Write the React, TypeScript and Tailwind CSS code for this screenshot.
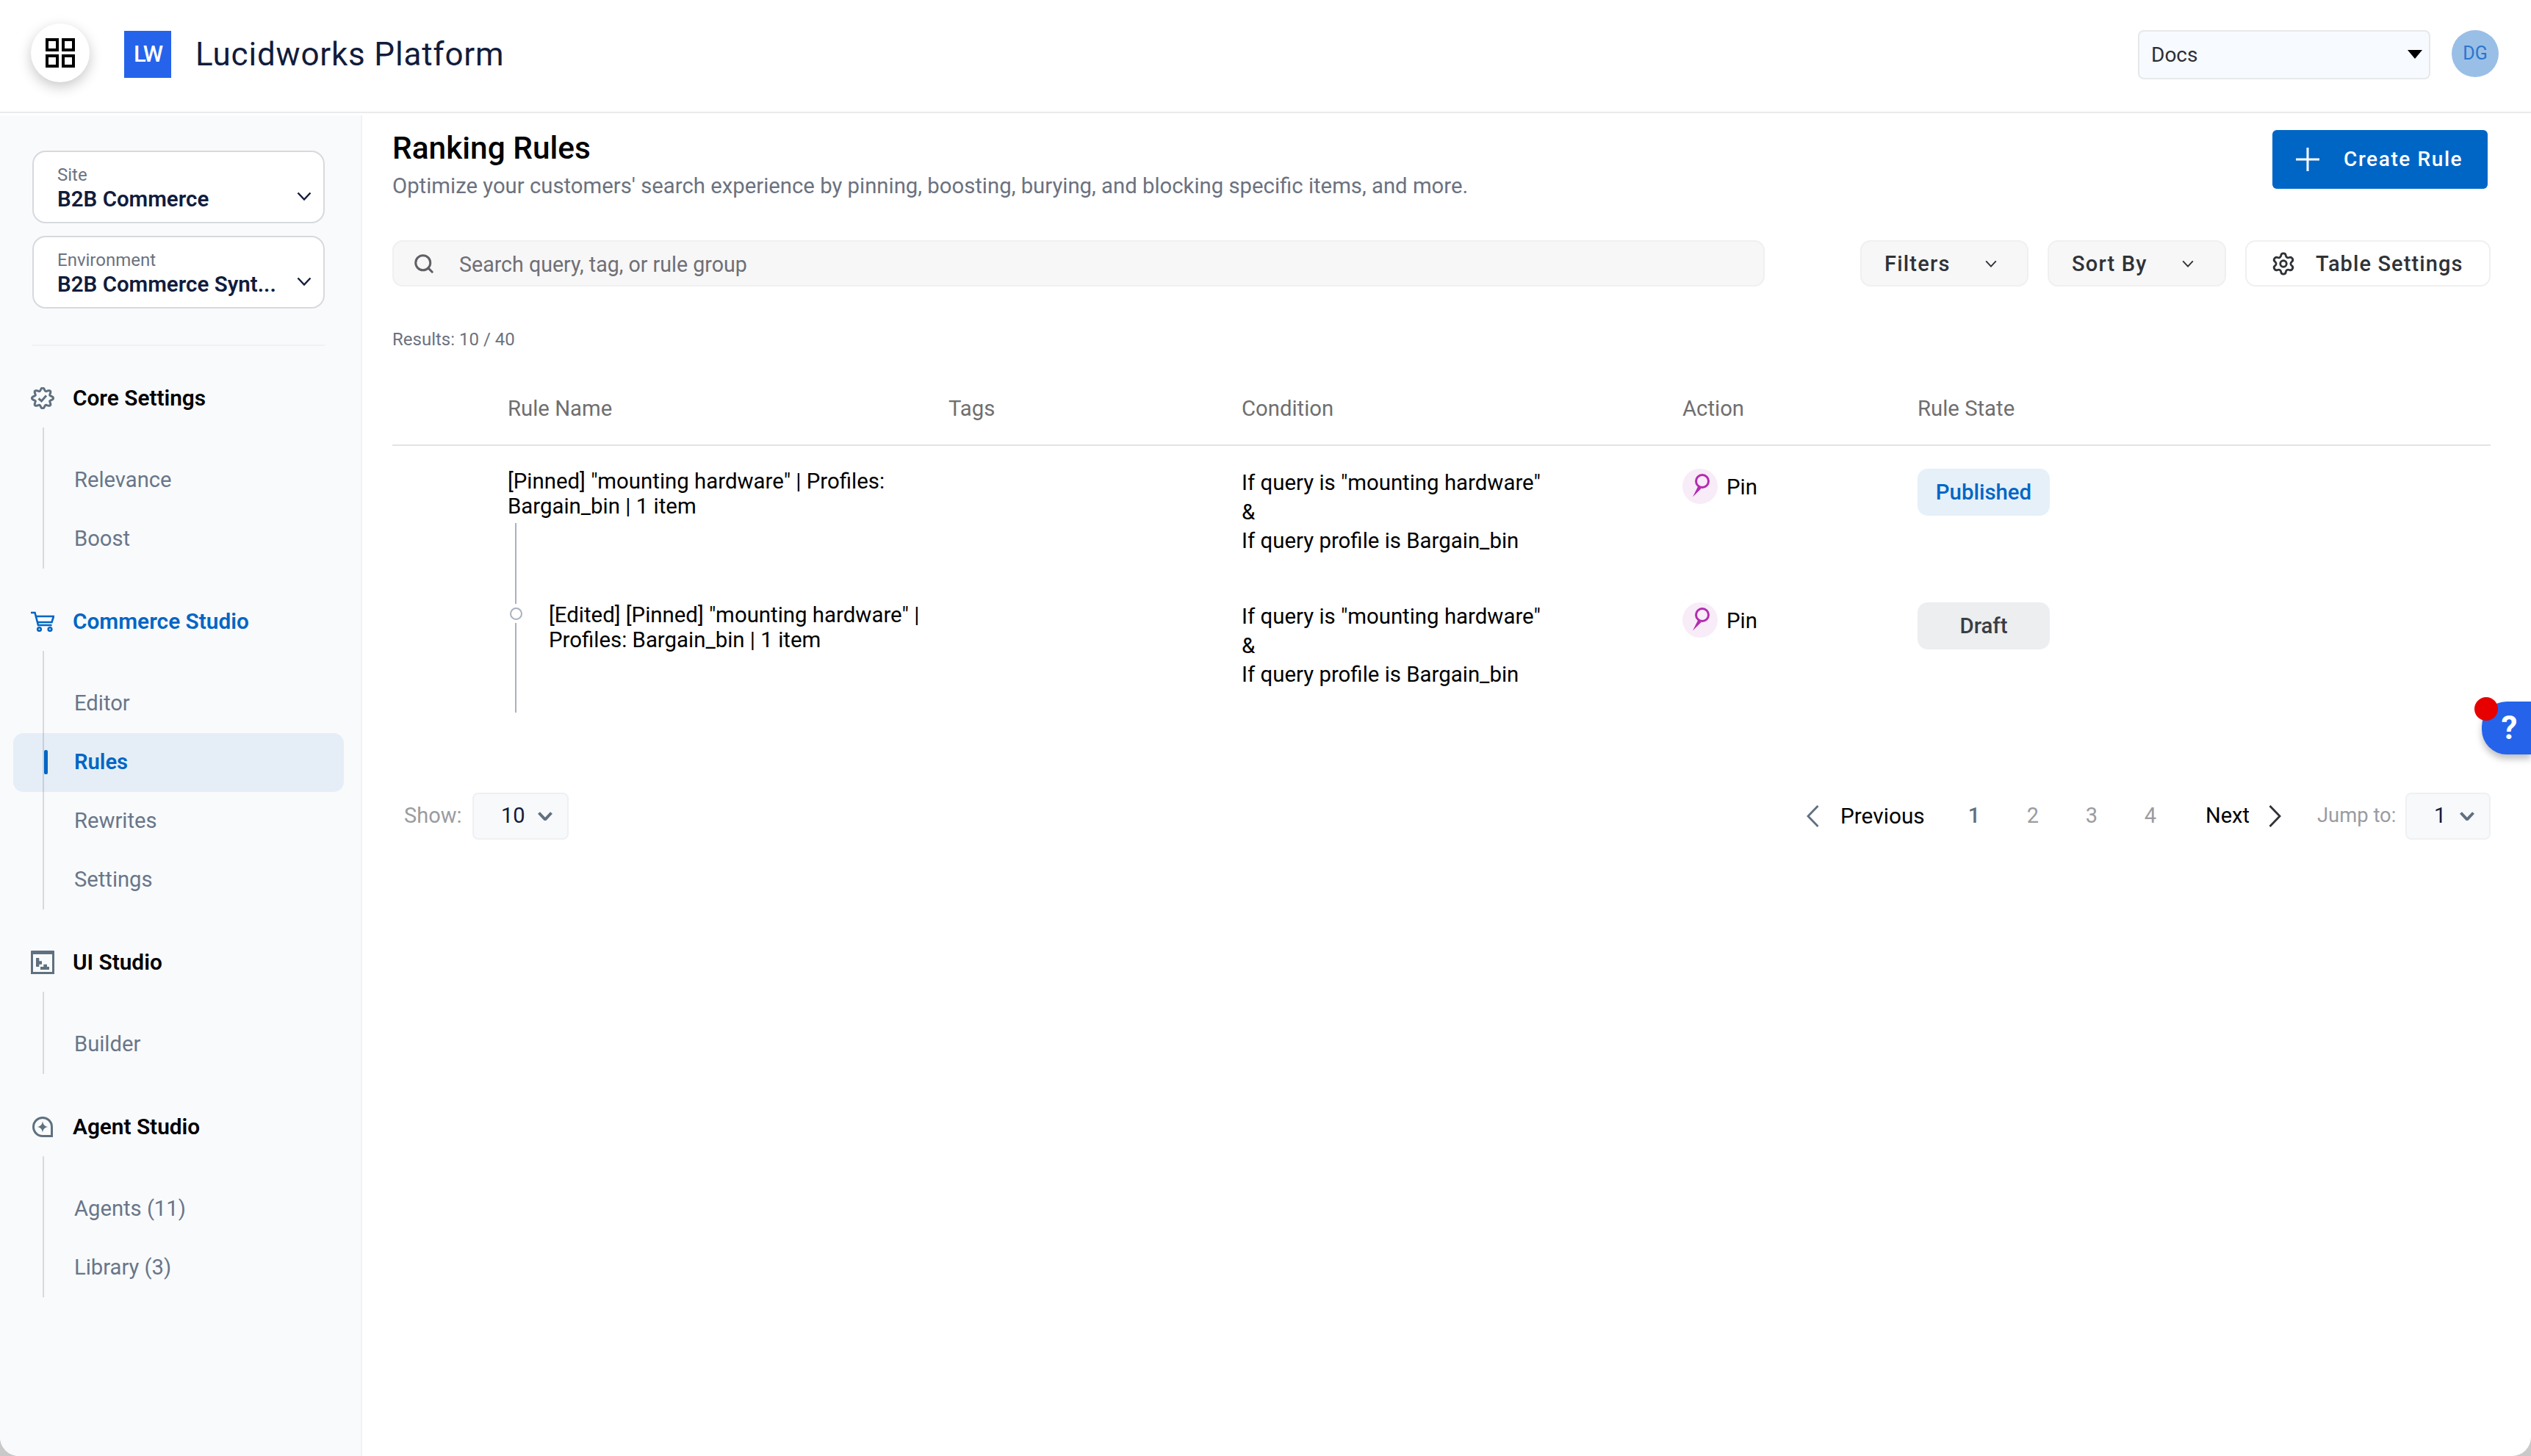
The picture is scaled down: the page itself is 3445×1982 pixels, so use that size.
import { Search, Settings } from "lucide-react";
import type { ReactNode } from "react";

const Chevron = ({ className = "", thick }: { className?: string; thick?: boolean }) => (
  <svg viewBox="0 0 20 12" fill="none" stroke="currentColor" strokeWidth={thick ? 4 : 2.4} className={className}>
    <path d="M1.5 1.5 10 10.5l8.5-9" />
  </svg>
);

const badgePoints = Array.from({ length: 97 }, (_, i) => {
  const t = (i / 96) * Math.PI * 2;
  const r = 12.6 + 2 * Math.cos(8 * t);
  return `${(16 + r * Math.sin(t)).toFixed(2)},${(15 + r * 0.96 * -Math.cos(t)).toFixed(2)}`;
}).join(" ");

const CoreIcon = () => (
  <svg viewBox="0 0 32 30" className="w-[32px] h-[30px]" fill="none" stroke="#5f7080" strokeWidth="3">
    <polyline points={badgePoints} />
    <path d="M10.5 15.5l4 3.5 6.5-7.5" />
  </svg>
);

const CartIcon = () => (
  <svg viewBox="0 0 32 28" className="w-[32px] h-[28px]" fill="none" stroke="#0066c5" strokeWidth="2.6">
    <path d="M0 2h5.5l4.5 17h18.5M7.5 7H31l-2.5 8H9.5" />
    <circle cx="11.5" cy="24.5" r="2.3" />
    <circle cx="26" cy="24.5" r="2.3" />
  </svg>
);

const UiIcon = () => (
  <svg viewBox="0 0 32 32" className="w-[32px] h-[32px]">
    <rect x="1.5" y="2.5" width="29" height="28" fill="none" stroke="#5f7080" strokeWidth="3" />
    <rect x="0" y="0" width="32" height="5" rx="1" fill="#5f7080" />
    <path d="M7 10h4.3v4.3H15v4.4h-3.7V22H7zM13 22h4.3v-3.3H22V22h3v4H13z" fill="#5f7080" />
  </svg>
);

const AgentIcon = () => (
  <svg viewBox="0 0 28 28" className="w-[28px] h-[28px]" fill="none">
    <path d="M26.5 26.5H14A12.5 12.5 0 1 1 26.5 14z" stroke="#5f7080" strokeWidth="3" />
    <path d="M14 6.5c.8 4.6 2.9 6.7 7.5 7.5-4.6.8-6.7 2.9-7.5 7.5-.8-4.6-2.9-6.7-7.5-7.5 4.6-.8 6.7-2.9 7.5-7.5z" fill="#5f7080" />
  </svg>
);

const PinIcon = () => (
  <div className="w-[48px] h-[48px] rounded-full bg-[#f7ecf7] shrink-0">
    <svg viewBox="0 0 48 48" className="w-[48px] h-[48px]" fill="none">
      <circle cx="27" cy="17" r="8.5" stroke="#b32bb0" strokeWidth="3" />
      <path d="M21.5 23.5 14 38.5 25.5 27z" fill="#b32bb0" />
    </svg>
  </div>
);

const PageArrow = ({ dir, className }: { dir: "left" | "right"; className: string }) => (
  <svg viewBox="0 0 17 30" fill="none" stroke="currentColor" strokeWidth="2.8" className={`w-[17px] h-[30px] shrink-0 ${className}`}>
    <path d={dir === "left" ? "M15.5 1 2 15l13.5 14" : "M1.5 1 15 15 1.5 29"} />
  </svg>
);

const SelectBox = ({ label, value }: { label: string; value: string }) => (
  <div className="relative w-[398px] h-[99px] rounded-[18px] border-2 border-[#d7d9de] bg-white pl-[32px] pt-[15px]">
    <div className="text-[24px] leading-[32px] text-[#6b7280]">{label}</div>
    <div className="text-[29.5px] leading-[34px] font-semibold text-[#111c3d] whitespace-nowrap">{value}</div>
    <Chevron className="absolute right-[16px] top-[54px] w-[20px] h-[12px] text-[#111c3d]" />
  </div>
);

const NavGroup = ({ icon, title, active, children }: { icon: ReactNode; title: string; active?: boolean; children: ReactNode }) => (
  <div className="mb-[52px]">
    <div className="flex items-center h-[40px] pl-[42px]">
      <div className="w-[32px] flex justify-center">{icon}</div>
      <span className={`ml-[25px] text-[29.8px] font-semibold ${active ? "text-[#0066c5]" : "text-black"}`}>{title}</span>
    </div>
    <div className="ml-[58px] mt-[20px] pt-[32px] border-l-2 border-[#d6d9df]">{children}</div>
  </div>
);

const NavItem = ({ label, active }: { label: string; active?: boolean }) =>
  active ? (
    <div className="relative -ml-[42px] w-[450px] h-[80px] flex items-center pl-[83px] rounded-[14px] bg-[#0066c5]/8 text-[29.2px] font-semibold text-[#0066c5]">
      <div className="absolute left-[42px] top-[23px] w-[5px] h-[33px] rounded-[2px] bg-[#0066c5]" />
      {label}
    </div>
  ) : (
    <div className="h-[80px] flex items-center pl-[41px] text-[29.2px] text-[#68768a]">{label}</div>
  );

const PillButton = ({ label, width, textWidth }: { label: string; width: string; textWidth: string }) => (
  <div className={`flex items-center h-[63px] pl-[31px] rounded-[14px] border-2 border-[#f0f0f0] bg-[#f7f7f7] text-[29px] font-medium text-[#2f3237] tracking-[1.2px] ${width}`}>
    <span className={`pt-[2px] ${textWidth}`}>{label}</span>
    <Chevron className="w-[16px] h-[10px] text-[#2f3237]" />
  </div>
);

const SmallSelect = ({ value, width }: { value: string; width: string }) => (
  <div className={`flex items-center justify-between h-[64px] pl-[37px] pr-[20px] rounded-[8px] border-2 border-[#eff0f2] bg-[#f8f9fb] text-[29px] text-[#111c3d] ${width}`}>
    {value}
    <Chevron thick className="w-[20px] h-[12px] text-[#5f7080]" />
  </div>
);

const cols = "grid grid-cols-[157px_600px_399px_600px_320px_1fr]";

const Row = ({ name, indent, badge, tree }: { name: ReactNode; indent?: boolean; badge: ReactNode; tree?: ReactNode }) => (
  <div className={`${cols} h-[182px] text-[29.4px] text-black`}>
    <div />
    <div className={`relative pt-[31px] leading-[34px] ${indent ? "pl-[56px]" : ""}`}>
      {name}
      {tree}
    </div>
    <div />
    <div className="pt-[31px] leading-[39.5px]">
      <div>If query is "mounting hardware"</div>
      <div>&amp;</div>
      <div>If query profile is Bargain_bin</div>
    </div>
    <div className="pt-[31px] flex items-start gap-[12px]">
      <PinIcon />
      <span className="leading-[50px]">Pin</span>
    </div>
    <div className="pt-[31px]">{badge}</div>
  </div>
);

const Badge = ({ label, className }: { label: string; className: string }) => (
  <div className={`w-[180px] h-[64px] rounded-[14px] flex items-center justify-center font-medium ${className}`}>{label}</div>
);

export default function App() {
  return (
    <div className="w-[3445px] h-[1982px] bg-[#c9c9c9] font-[family-name:Roboto,sans-serif]">
      <div className="relative w-full h-full overflow-hidden rounded-b-[26px] bg-white flex flex-col">
        {/* Header */}
        <header className="h-[154px] shrink-0 flex items-center pl-[42px] pr-[44px] border-b-2 border-[#e9eaec]">
          <div className="w-[80px] h-[80px] -mt-[8px] rounded-full bg-white shadow-[0_6px_18px_rgba(0,0,0,0.22)] flex items-center justify-center">
            <svg viewBox="0 0 40 40" className="w-[40px] h-[40px]" fill="none" stroke="black" strokeWidth="4">
              <rect x="2" y="2" width="14" height="14" />
              <rect x="24" y="2" width="14" height="14" />
              <rect x="2" y="24" width="14" height="14" />
              <rect x="24" y="24" width="14" height="14" />
            </svg>
          </div>
          <div className="ml-[47px] w-[64px] h-[64px] -mt-[4px] bg-[#2563eb] flex items-center justify-center text-white text-[31px] font-medium tracking-[-2px]">LW</div>
          <div className="ml-[33px] -mt-[4px] text-[44px] text-[#111c3d] tracking-[0.8px]">Lucidworks Platform</div>
          <div className="ml-auto -mt-[4px] flex items-center w-[398px] h-[67px] pl-[16px] pr-[9px] justify-between rounded-[8px] border-2 border-[#e7e8ea] bg-[#f7fafe] text-[28px] text-[#2b2f36]">
            <span className="pt-[2px]">Docs</span>
            <svg viewBox="0 0 20 12" className="w-[20px] h-[12px]"><path d="M0 0h20L10 12z" fill="black" /></svg>
          </div>
          <div className="ml-[29px] -mt-[6px] w-[64px] h-[64px] rounded-full bg-[#9abfe6] flex items-center justify-center text-[25px] text-[#2a76cd]">DG</div>
        </header>

        <div className="flex flex-1 mt-[3px] min-h-0">
          {/* Sidebar */}
          <aside className="w-[493px] shrink-0 bg-[#f9fafb] border-r-2 border-[#f1f2f4] pt-[48px]">
            <div className="pl-[44px] flex flex-col gap-[17px]">
              <SelectBox label="Site" value="B2B Commerce" />
              <SelectBox label="Environment" value="B2B Commerce Synt..." />
            </div>
            <div className="ml-[44px] w-[398px] mt-[49px] mb-[51px] h-[2px] bg-[#f0f1f3]" />
            <NavGroup icon={<CoreIcon />} title="Core Settings">
              <NavItem label="Relevance" />
              <NavItem label="Boost" />
            </NavGroup>
            <NavGroup icon={<CartIcon />} title="Commerce Studio" active>
              <NavItem label="Editor" />
              <NavItem label="Rules" active />
              <NavItem label="Rewrites" />
              <NavItem label="Settings" />
            </NavGroup>
            <NavGroup icon={<UiIcon />} title="UI Studio">
              <NavItem label="Builder" />
            </NavGroup>
            <NavGroup icon={<AgentIcon />} title="Agent Studio">
              <NavItem label="Agents (11)" />
              <NavItem label="Library (3)" />
            </NavGroup>
          </aside>

          {/* Main */}
          <main className="flex-1 pl-[41px] pr-[55px] pt-[20px]">
            <div className="flex justify-between items-start h-[96px]">
              <div className="pt-[3px]">
                <h1 className="text-[42.4px] leading-[44px] font-medium text-black">Ranking Rules</h1>
                <p className="mt-[9px] text-[29.3px] leading-[40px] text-[#6b7280]">
                  Optimize your customers' search experience by pinning, boosting, burying, and blocking specific items, and more.
                </p>
              </div>
              <div className="mr-[4px] w-[293px] h-[80px] rounded-[6px] bg-[#0066c5] flex items-center pl-[32px] text-white text-[28px] font-medium tracking-[1.6px]">
                <svg viewBox="0 0 32 32" className="w-[32px] h-[32px]" stroke="white" strokeWidth="3">
                  <path d="M16 0v32M0 16h32" />
                </svg>
                <span className="ml-[33px]">Create Rule</span>
              </div>
            </div>

            <div className="mt-[54px] flex items-center">
              <div className="w-[1868px] h-[63px] flex items-center pl-[26px] rounded-[14px] border-2 border-[#f0f0f0] bg-[#f7f7f7] text-[28.6px] text-[#6f6f76]">
                <Search size={30} strokeWidth={2.4} className="text-[#5f5f66]" />
                <span className="ml-[33px] pt-[3px]">Search query, tag, or rule group</span>
              </div>
              <div className="ml-auto flex items-center gap-[26px]">
                <PillButton label="Filters" width="w-[229px]" textWidth="w-[137px]" />
                <PillButton label="Sort By" width="w-[243px]" textWidth="w-[150px]" />
                <div className="w-[334px] h-[63px] flex items-center pl-[33px] rounded-[14px] border-2 border-[#f0f0f0] bg-white text-[29px] font-medium text-[#2f3237] tracking-[1.1px]">
                  <Settings size={34} strokeWidth={2} />
                  <span className="ml-[27px] pt-[2px]">Table Settings</span>
                </div>
              </div>
            </div>

            <div className="mt-[56px] text-[24px] leading-[32px] text-[#6b7280]">Results: 10 / 40</div>

            <div className={`${cols} mt-[30px] h-[99px] items-center border-b-2 border-[#e2e3e5] text-[29.3px] text-[#6f6f6f]`}>
              <div />
              <div>Rule Name</div>
              <div>Tags</div>
              <div>Condition</div>
              <div>Action</div>
              <div>Rule State</div>
            </div>

            <Row
              name={<div className="w-[560px]">[Pinned] "mounting hardware" | Profiles: Bargain_bin | 1 item</div>}
              badge={<Badge label="Published" className="bg-[#e6f0f9] text-[#0066c5]" />}
              tree={<div className="absolute left-[10px] top-[105px] w-[2px] h-[110px] bg-[#a9b2bd]" />}
            />
            <Row
              indent
              name={<div className="w-[540px]">[Edited] [Pinned] "mounting hardware" | Profiles: Bargain_bin | 1 item</div>}
              badge={<Badge label="Draft" className="bg-[#eceef0] text-[#3a3d42]" />}
              tree={
                <>
                  <div className="absolute left-[3px] top-[38px] w-[17px] h-[17px] rounded-full border-2 border-[#a9b2bd] bg-white" />
                  <div className="absolute left-[10px] top-[59px] w-[2px] h-[122px] bg-[#a9b2bd]" />
                </>
              }
            />

            {/* Pagination */}
            <div className="mt-[108px] flex items-center text-[29px]">
              <span className="ml-[16px] w-[93px] text-[#9a9ca0]">Show:</span>
              <SmallSelect value="10" width="w-[131px]" />
              <PageArrow dir="left" className="ml-auto text-[#5f7080]" />
              <span className="ml-[29px] w-[116px] whitespace-nowrap text-[29.8px] text-black">Previous</span>
              <div className="ml-[26px] flex text-[#9a9ca0]">
                <span className="w-[80px] text-center text-[#5f7080] font-medium">1</span>
                <span className="w-[80px] text-center">2</span>
                <span className="w-[80px] text-center">3</span>
                <span className="w-[80px] text-center">4</span>
              </div>
              <span className="ml-[35px] w-[61px] whitespace-nowrap text-black">Next</span>
              <PageArrow dir="right" className="ml-[25px] text-[#2f3237]" />
              <span className="ml-[49px] w-[107px] whitespace-nowrap text-[27.4px] text-[#9a9ca0]">Jump to:</span>
              <SmallSelect value="1" width="ml-[13px] w-[116px]" />
            </div>
          </main>
        </div>

        {/* Help tab */}
        <div className="absolute right-0 top-[955px] w-[67px] h-[72px] rounded-l-[34px] bg-[#2563eb] shadow-[0_6px_10px_rgba(0,0,0,0.25)] flex items-center justify-center pl-[8px] text-white text-[44px] font-bold">
          ?
        </div>
        <div className="absolute left-[3368px] top-[949px] w-[32px] h-[32px] rounded-full bg-[#e60000]" />
      </div>
    </div>
  );
}
